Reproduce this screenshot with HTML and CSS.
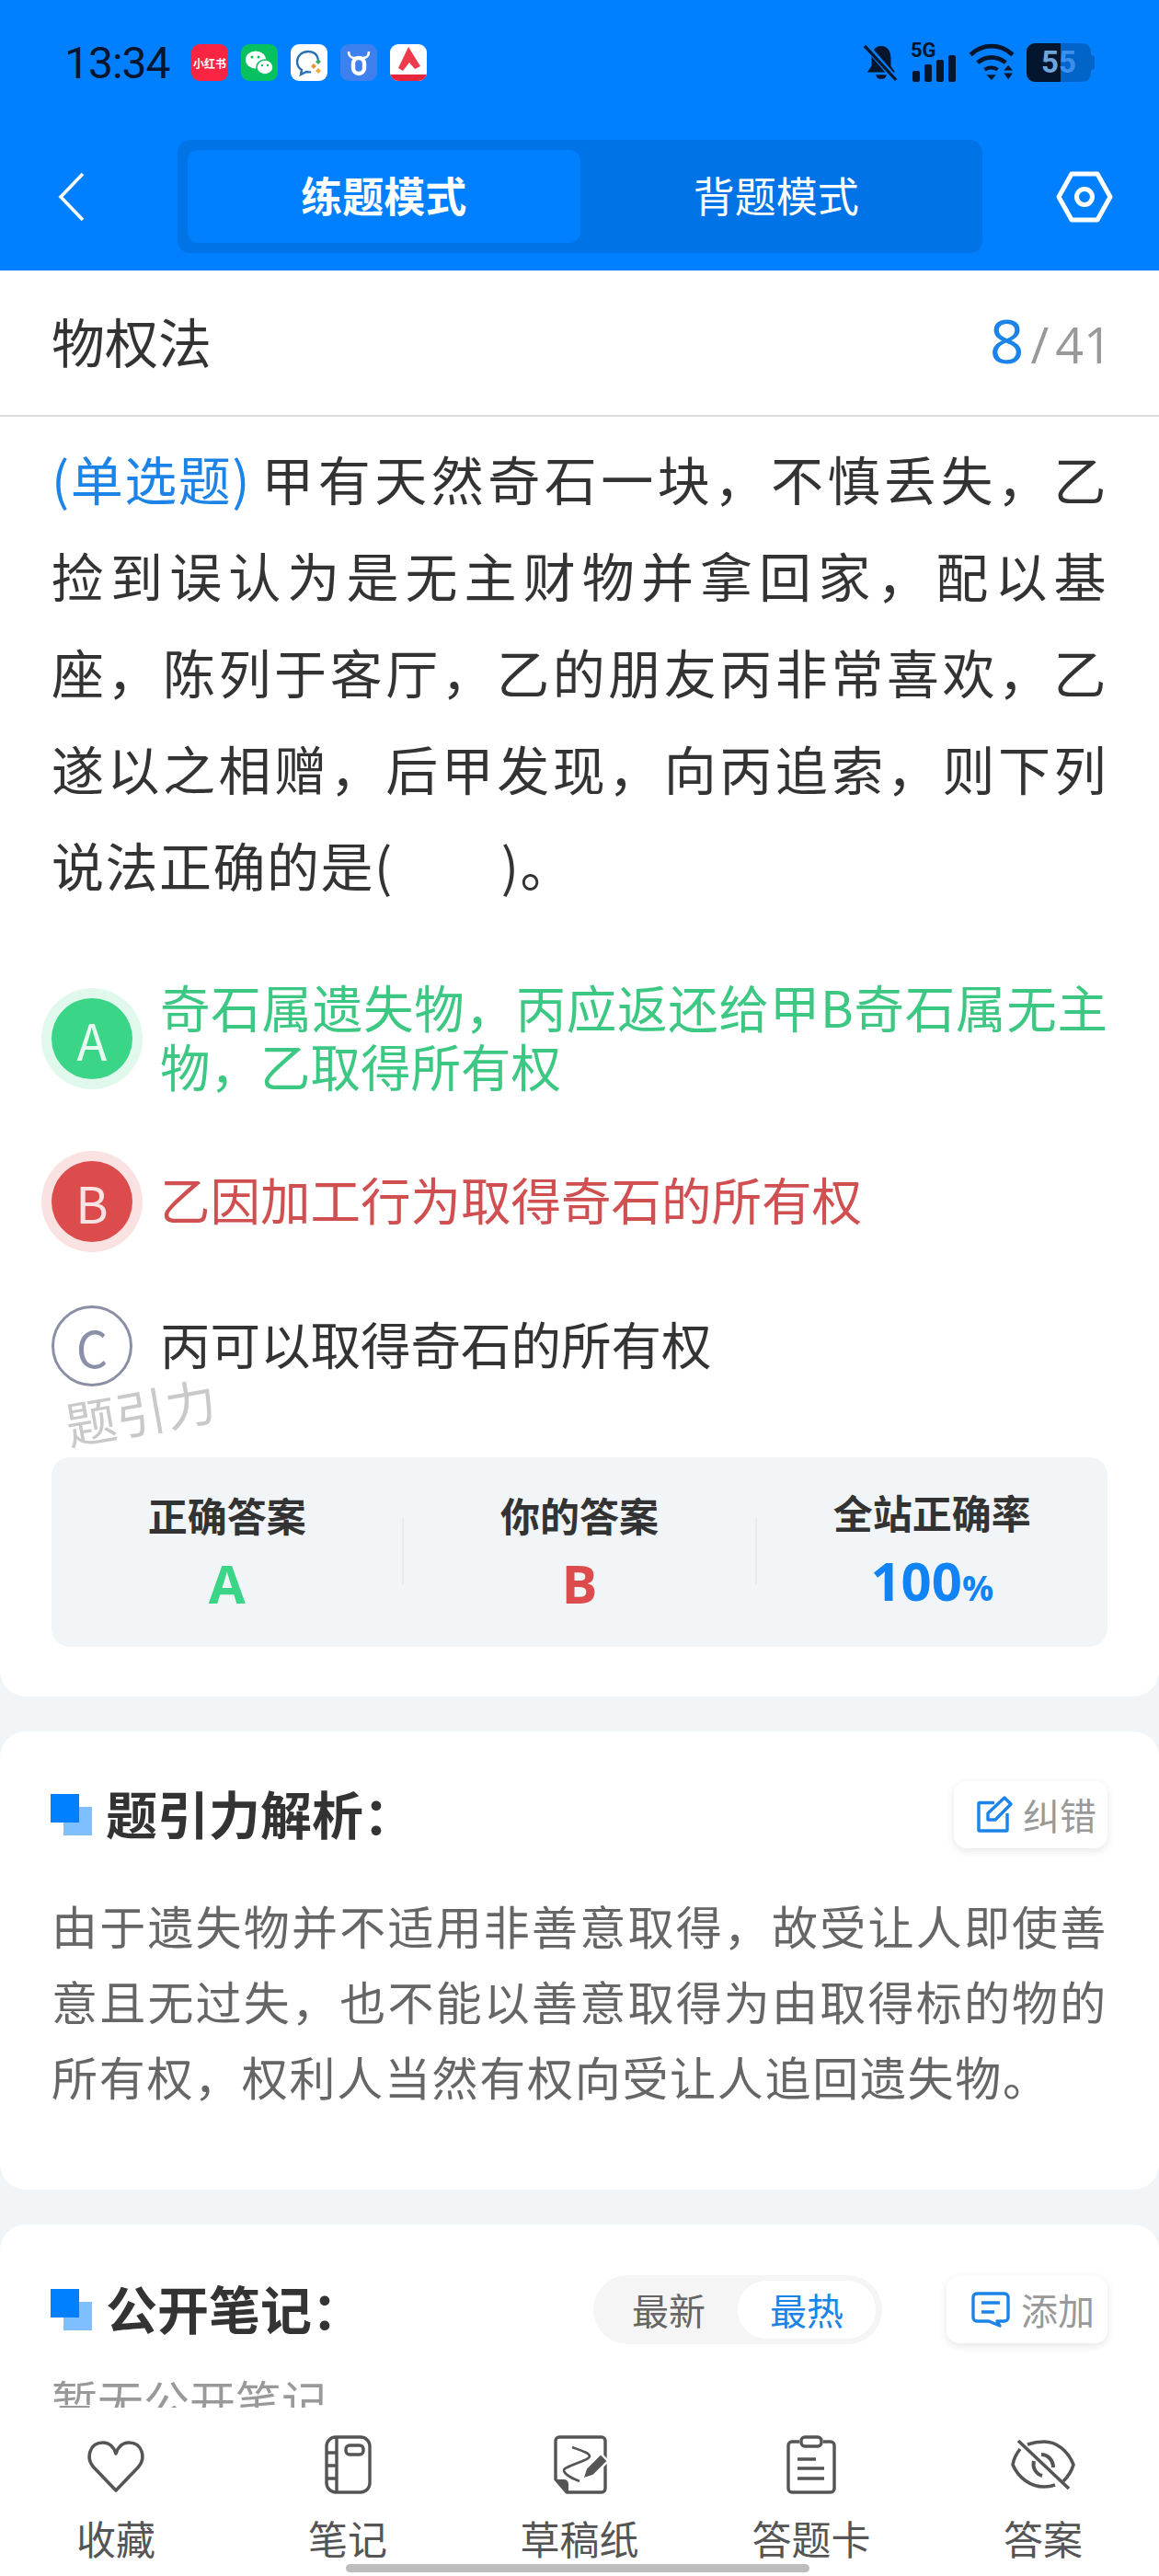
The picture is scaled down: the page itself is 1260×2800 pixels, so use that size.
FILE: index.html
```html
<!DOCTYPE html>
<html lang="zh-CN">
<head>
    <meta charset="UTF-8">
    <title>物权法</title>
    <link rel="stylesheet" href="styles.css">
</head>
<body>
    <div class="app">
        <div class="top-blue">
            <div class="status-bar">
                <span class="clock">13:34</span>
                <div class="notif-icons">
                    <span class="app-ic ic-red">小红书</span>
                    <span class="app-ic ic-green">
                        <svg viewBox="0 0 40 40" width="40" height="40"><ellipse cx="16" cy="17" rx="11" ry="9.5" fill="#fff"/><ellipse cx="26" cy="25" rx="9" ry="8" fill="#fff" stroke="#07c160" stroke-width="1.5"/><circle cx="12" cy="14" r="1.5" fill="#07c160"/><circle cx="19" cy="14" r="1.5" fill="#07c160"/><circle cx="23" cy="23" r="1.2" fill="#07c160"/><circle cx="29" cy="23" r="1.2" fill="#07c160"/></svg>
                    </span>
                    <span class="app-ic ic-white">
                        <svg viewBox="0 0 40 40" width="40" height="40"><path d="M30 17C29 11 25 8 19 8 12 8 7 13 7 19c0 4 2 7 5 9l-1 5 6-3c2 .5 4 .5 5 0" fill="none" stroke="#2a6fb5" stroke-width="2.4"/><path d="M27 19l3-3 3 3-3 3z" fill="#3aa76d"/><path d="M22 24l3-3 3 3-3 3z" fill="#e8963a"/><path d="M27 29l3-3 3 3-3 3z" fill="#e8b03a"/></svg>
                    </span>
                    <span class="app-ic ic-blue">
                        <svg viewBox="0 0 40 40" width="40" height="40"><path d="M9 8c0 5 3 7 6 7h10c3 0 6-2 6-7" fill="none" stroke="#fff" stroke-width="2.6"/><rect x="14" y="15" width="12" height="17" rx="6" fill="none" stroke="#fff" stroke-width="4.4"/></svg>
                    </span>
                    <span class="app-ic ic-book">
                        <svg viewBox="0 0 40 40" width="40" height="40"><path d="M20 3L9 26l5 3 7-9 6 7 6-3z" fill="#ee3b4c"/><rect x="0" y="33" width="40" height="7" fill="#e8263e"/></svg>
                    </span>
                </div>
                <div class="sys-icons">
                    <svg class="sys-bell" viewBox="0 0 40 44" width="38" height="42"><path d="M20 3c8 0 11 7 11 14v9l5 7H4l5-7v-9C9 10 12 3 20 3z" fill="#04162e"/><path d="M14 36h12a6 5 0 0 1-12 0z" fill="#04162e"/><path d="M3 3l34 39" stroke="#0080ff" stroke-width="7"/><path d="M1 3l36 39" stroke="#04162e" stroke-width="3.4"/></svg>
                    <div class="sys-signal">
                        <span class="sig-5g">5G</span>
                        <svg viewBox="0 0 47 29" width="47" height="29"><rect x="0" y="17" width="8" height="12" rx="2"/><rect x="13" y="10" width="8" height="19" rx="2"/><rect x="26" y="5" width="8" height="24" rx="2"/><rect x="39" y="0" width="8" height="29" rx="2"/></svg>
                    </div>
                    <svg class="sys-wifi" viewBox="0 0 52 44" width="52" height="42"><path d="M2 13c14-13 34-13 48 0" fill="none" stroke="#04162e" stroke-width="5"/><path d="M10 22c10-8 22-8 32 0" fill="none" stroke="#04162e" stroke-width="5"/><path d="M18 30c5-3 10-3 15 0" fill="none" stroke="#04162e" stroke-width="4"/><path d="M20 36h11l-5 6zM40 31l5-6 5 6zM40 34h10l-5 7z" fill="#04162e"/></svg>
                    <div class="battery">
                        <span class="batt-fill"></span>
                        <span class="batt-num">5<span class="batt-num2">5</span></span>
                    </div>
                </div>
            </div>
            <div class="nav-bar">
                <svg class="nav-back" viewBox="0 0 30 56" width="30" height="56"><path d="M27 3L3 28l24 25" fill="none" stroke="#fff" stroke-width="3.6"/></svg>
                <div class="mode-tabs">
                    <div class="mode-tab active">练题模式</div>
                    <div class="mode-tab">背题模式</div>
                </div>
                <svg class="nav-set" viewBox="0 0 62 56" width="62" height="56"><path d="M17 3h28l14 25-14 25H17L3 28z" fill="none" stroke="#fff" stroke-width="5" stroke-linejoin="round"/><circle cx="31" cy="28" r="8.5" fill="none" stroke="#fff" stroke-width="5"/></svg>
            </div>
        </div>

        <div class="card card-question">
            <div class="chapter-row">
                <span class="chapter-name">物权法</span>
                <span class="chapter-count"><b>8</b><i>/</i>41</span>
            </div>
            <div class="question-text"><span class="q-type">(单选题)</span>甲有天然奇石一块，不慎丢失，乙捡到误认为是无主财物并拿回家，配以基座，陈列于客厅，乙的朋友丙非常喜欢，乙遂以之相赠，后甲发现，向丙追索，则下列说法正确的是(　　)。</div>
            <div class="options">
                <div class="option opt-right">
                    <span class="opt-badge">A</span>
                    <span class="opt-text">奇石属遗失物，丙应返还给甲B奇石属无主物，乙取得所有权</span>
                </div>
                <div class="option opt-wrong">
                    <span class="opt-badge">B</span>
                    <span class="opt-text">乙因加工行为取得奇石的所有权</span>
                </div>
                <div class="option">
                    <span class="opt-badge">C</span>
                    <span class="opt-text">丙可以取得奇石的所有权</span>
                </div>
                <span class="watermark">题引力</span>
            </div>
            <div class="result-box">
                <div class="result-cell">
                    <div class="result-label">正确答案</div>
                    <div class="result-val green">A</div>
                </div>
                <span class="result-sep"></span>
                <div class="result-cell">
                    <div class="result-label">你的答案</div>
                    <div class="result-val red">B</div>
                </div>
                <span class="result-sep"></span>
                <div class="result-cell">
                    <div class="result-label">全站正确率</div>
                    <div class="result-val blue">100<small>%</small></div>
                </div>
            </div>
        </div>

        <div class="card card-analysis">
            <div class="sec-head">
                <span class="sec-mark"></span>
                <span class="sec-title">题引力解析：</span>
                <span class="mini-btn">
                    <svg viewBox="0 0 40 40" width="40" height="40"><path d="M19 7.5H3a1 1 0 0 0-1 1V37a1 1 0 0 0 1 1h29a1 1 0 0 0 1-1V19" fill="none" stroke="#1c84e8" stroke-width="3.4" stroke-linejoin="round"/><path d="M12 26v-7L30 2l7 7-17 17z" fill="none" stroke="#1c84e8" stroke-width="3.4" stroke-linejoin="round"/></svg>
                    纠错
                </span>
            </div>
            <div class="analysis-text">由于遗失物并不适用非善意取得，故受让人即使善意且无过失，也不能以善意取得为由取得标的物的所有权，权利人当然有权向受让人追回遗失物。</div>
        </div>

        <div class="card card-notes">
            <div class="sec-head">
                <span class="sec-mark"></span>
                <span class="sec-title">公开笔记：</span>
                <div class="sort-pill">
                    <span class="sort-item">最新</span>
                    <span class="sort-item active">最热</span>
                </div>
                <span class="mini-btn btn-add">
                    <svg viewBox="0 0 42 40" width="42" height="40"><path d="M6 3h30a4 4 0 0 1 4 4v22a4 4 0 0 1-4 4H28l3 5-12-5H6a4 4 0 0 1-4-4V7a4 4 0 0 1 4-4z" fill="none" stroke="#1c84e8" stroke-width="3.4" stroke-linejoin="round"/><path d="M11 13h20M11 23h14" stroke="#1c84e8" stroke-width="3.4"/></svg>
                    添加
                </span>
            </div>
            <div class="notes-empty">暂无公开笔记</div>
        </div>

        <div class="tool-bar">
            <div class="tool">
                <svg viewBox="0 0 64 64" width="64" height="64"><path d="M32 60L8 35C-1 25 3 8 18 8c7 0 12 5 14 12 2-7 7-12 14-12 15 0 19 17 10 27z" fill="none" stroke="#555" stroke-width="3.6" stroke-linejoin="round"/></svg>
                <span>收藏</span>
            </div>
            <div class="tool">
                <svg viewBox="0 0 64 64" width="64" height="64"><rect x="9" y="2" width="47" height="60" rx="10" fill="none" stroke="#555" stroke-width="3.4"/><path d="M20 2v60M9 19h11M9 33h11M9 47h11" stroke="#555" stroke-width="3.4"/><rect x="30" y="11" width="19" height="10" rx="4" fill="none" stroke="#555" stroke-width="3.4"/></svg>
                <span>笔记</span>
            </div>
            <div class="tool">
                <svg viewBox="0 0 64 64" width="64" height="64"><path d="M18 62h38a4 4 0 0 0 4-4V6a4 4 0 0 0-4-4H10a4 4 0 0 0-4 4v42z" fill="none" stroke="#555" stroke-width="3.4" stroke-linejoin="round"/><path d="M6 48h9a5 5 0 0 1 5 5v9z" fill="#555"/><path d="M24 13c8 3 19 6 19 10s-28 11-28 15 9 9 17 12" fill="none" stroke="#555" stroke-width="2.6"/><path d="M35 48l4-12 16-16 8 8-16 16z" fill="#555" stroke="#fff" stroke-width="2.4"/></svg>
                <span>草稿纸</span>
            </div>
            <div class="tool">
                <svg viewBox="0 0 64 64" width="64" height="64"><path d="M19 7h-8a4 4 0 0 0-4 4v47a4 4 0 0 0 4 4h42a4 4 0 0 0 4-4V11a4 4 0 0 0-4-4h-8" fill="none" stroke="#555" stroke-width="3.4"/><rect x="21" y="2" width="22" height="10" rx="4" fill="none" stroke="#555" stroke-width="3.4"/><path d="M17 26h20M17 36h29M17 47h29" stroke="#555" stroke-width="3.6"/></svg>
                <span>答题卡</span>
            </div>
            <div class="tool">
                <svg viewBox="0 0 70 64" width="70" height="64"><path d="M18 10c6-2 12-3 18-3 14 0 26 10 32 25-2 7-6 13-11 18" fill="none" stroke="#555" stroke-width="3.6"/><path d="M10 15c-4 5-7 11-8 17 6 14 19 24 34 24 4 0 8-.5 12-2" fill="none" stroke="#555" stroke-width="3.6"/><path d="M8 6l55 52" stroke="#555" stroke-width="3.6"/><path d="M25 28c-2 7 2 14 9 16M33 21c7 0 13 6 13 14" fill="none" stroke="#555" stroke-width="4"/></svg>
                <span>答案</span>
            </div>
            <span class="home-bar"></span>
        </div>
    </div>
</body>
</html>
```

FILE: styles.css
```css
* {
    box-sizing: border-box;
}
html, body {
    margin: 0;
    padding: 0;
}
body {
    font-family: "Noto Sans CJK SC", "Noto Sans", sans-serif;
    background-color: #f1f5f8;
    color: #333;
}
.app {
    width: 1260px;
    height: 2800px;
    display: flex;
    flex-direction: column;
    overflow: hidden;
    position: relative;
}

/* top */
.top-blue {
    height: 294px;
    flex-shrink: 0;
    background-color: #0080ff;
}
.status-bar {
    height: 136px;
    display: flex;
    align-items: center;
    padding: 0 74px 0 70px;
}
.clock {
    font-family: "Roboto", sans-serif;
    font-size: 48px;
    color: #04162e;
    letter-spacing: -1px;
    width: 122px;
    flex-shrink: 0;
}
.notif-icons {
    display: flex;
    gap: 14px;
    margin-left: 16px;
}
.app-ic {
    width: 40px;
    height: 40px;
    border-radius: 9px;
    overflow: hidden;
    display: flex;
    align-items: center;
    justify-content: center;
}
.ic-red {
    background-color: #fb2543;
    color: #fff;
    font-size: 12px;
    font-weight: bold;
    white-space: nowrap;
}
.ic-green {
    background-color: #07c160;
}
.ic-white {
    background-color: #fff;
}
.ic-blue {
    background-color: #3d80ee;
}
.ic-book {
    background-color: #fff;
}
.sys-icons {
    margin-left: auto;
    display: flex;
    align-items: center;
    gap: 13px;
}
.sys-signal {
    width: 49px;
    display: flex;
    flex-direction: column;
    align-items: flex-end;
}
.sys-signal svg {
    fill: #04162e;
    margin-top: -3px;
    display: block;
}
.sig-5g {
    align-self: flex-start;
    font-family: "Roboto", sans-serif;
    font-size: 22px;
    font-weight: 700;
    line-height: 16px;
    color: #04162e;
}
.battery {
    width: 70px;
    height: 42px;
    margin-left: -1px;
    background-color: #0064c8;
    border-radius: 9px;
    position: relative;
}
.battery::after {
    content: "";
    position: absolute;
    right: -4px;
    top: 13px;
    width: 4px;
    height: 16px;
    border-radius: 0 3px 3px 0;
    background-color: #0064c8;
}
.batt-fill {
    position: absolute;
    left: 0;
    top: 0;
    bottom: 0;
    width: 37px;
    border-radius: 9px 0 0 9px;
    background-color: #04162e;
}
.batt-num {
    position: absolute;
    left: 16px;
    top: 0;
    font-family: "Roboto", sans-serif;
    font-size: 33px;
    font-weight: 700;
    line-height: 42px;
    color: #6ea6dc;
}
.batt-num2 {
    color: #3f90ee;
}
.nav-bar {
    height: 158px;
    display: flex;
    align-items: flex-start;
    padding: 16px 0 0 0;
}
.nav-back {
    margin: 34px 0 0 63px;
    flex-shrink: 0;
}
.mode-tabs {
    width: 875px;
    height: 123px;
    margin: 0 0 0 100px;
    padding: 11px;
    background-color: #0073e6;
    border-radius: 14px;
    display: flex;
    flex-shrink: 0;
}
.mode-tab {
    width: 50%;
    border-radius: 12px;
    color: #fff;
    font-size: 45px;
    line-height: 98px;
    height: 101px;
    text-align: center;
}
.mode-tab.active {
    background-color: #0080ff;
    font-weight: bold;
}
.nav-set {
    margin: 34px 0 0 80px;
    flex-shrink: 0;
}

/* cards */
.card {
    background-color: #fff;
    border-radius: 0 0 28px 28px;
    flex-shrink: 0;
}
.card-question {
    height: 1550px;
}
.chapter-row {
    height: 159px;
    padding: 0 51px 0 56px;
    border-bottom: 2px solid #dadada;
    display: flex;
    align-items: center;
    justify-content: space-between;
}
.chapter-name {
    font-size: 58px;
    color: #333;
    margin-top: -6px;
}
.chapter-count {
    font-family: "Open Sans", sans-serif;
    font-size: 54px;
    color: #999;
    margin-top: -8px;
}
.chapter-count b {
    font-size: 66px;
    font-weight: 400;
    color: #1c84e8;
}
.chapter-count i {
    font-style: normal;
    margin: 0 7px;
}
.question-text {
    margin: 0 56px;
    padding-top: 14px;
    font-size: 57px;
    line-height: 105px;
    letter-spacing: 1.5px;
    text-align: justify;
    color: #333;
}
.q-type {
    color: #1c84e8;
    letter-spacing: -1.5px;
    margin-right: 11px;
}
.options {
    margin: 76px 56px 0;
    position: relative;
}
.option {
    display: flex;
    align-items: center;
    min-height: 88px;
    margin-bottom: 69px;
}
.option.opt-right {
    margin-bottom: 72px;
}
.option:last-of-type {
    margin-bottom: 77px;
}
.opt-badge {
    width: 88px;
    height: 88px;
    flex-shrink: 0;
    border-radius: 50%;
    border: 3px solid #8a8fa5;
    color: #8a90a8;
    font-size: 54px;
    display: flex;
    align-items: center;
    justify-content: center;
    margin-right: 30px;
}
.opt-text {
    flex: 1;
    margin-top: -6px;
    font-size: 54.5px;
    line-height: 64px;
    text-align: justify;
    color: #333;
}
.opt-right .opt-badge {
    background-color: #3ad587;
    border: none;
    color: #e8fbf1;
    box-shadow: 0 0 0 11px #e1f8ec;
}
.opt-right .opt-text {
    color: #3cc883;
}
.opt-wrong .opt-badge {
    background-color: #dc4c4c;
    border: none;
    color: #fbe3e3;
    box-shadow: 0 0 0 11px #fae2e2;
}
.opt-wrong .opt-text {
    color: #d04f50;
}
.watermark {
    position: absolute;
    left: 14px;
    bottom: -65px;
    font-size: 55px;
    line-height: 78px;
    color: #c9c9c9;
    transform: rotate(-10deg);
}
.result-box {
    margin: 0 56px;
    height: 206px;
    padding-top: 5px;
    background-color: #f1f5f8;
    border-radius: 20px;
    display: flex;
    align-items: center;
}
.result-cell {
    flex: 1;
    text-align: center;
}
.result-sep {
    width: 2px;
    height: 73px;
    margin-top: -8px;
    background-color: #e8ecef;
}
.result-label {
    font-size: 43px;
    font-weight: bold;
    line-height: 46px;
    color: #333;
}
.result-val {
    font-family: "Open Sans", sans-serif;
    font-size: 58px;
    font-weight: 700;
    line-height: 70px;
    margin-top: 17px;
}
.result-val small {
    font-size: 38px;
}
.green {
    color: #3ad587;
}
.red {
    color: #dc4c4c;
}
.blue {
    color: #1084f5;
}
.card-analysis {
    margin-top: 38px;
    height: 498px;
    border-radius: 28px;
    padding: 53px 56px 0;
}
.sec-head {
    display: flex;
    align-items: center;
    height: 74px;
}
.sec-mark {
    width: 45px;
    height: 45px;
    margin-left: -1px;
    position: relative;
    flex-shrink: 0;
}
.sec-mark::before,
.sec-mark::after {
    content: "";
    position: absolute;
    width: 31px;
    height: 31px;
}
.sec-mark::before {
    right: 0;
    bottom: 0;
    background-color: #80bfff;
}
.sec-mark::after {
    left: 0;
    top: 0;
    background-color: #0080ff;
}
.sec-title {
    font-size: 56px;
    font-weight: bold;
    color: #333;
    margin: -6px 0 0 15px;
}
.mini-btn {
    margin-left: auto;
    width: 167px;
    height: 73px;
    padding-left: 25px;
    background-color: #fff;
    border-radius: 14px;
    box-shadow: 0 3px 10px rgba(0, 0, 0, 0.1);
    color: #999;
    font-size: 40px;
    display: flex;
    align-items: center;
    gap: 10px;
    flex-shrink: 0;
}
.analysis-text {
    margin-top: 42px;
    font-size: 50px;
    line-height: 82px;
    letter-spacing: 1.7px;
    color: #666;
    text-align: justify;
}
.card-notes {
    margin-top: 38px;
    height: 300px;
    border-radius: 28px 28px 0 0;
    padding: 55px 56px 0;
}
.sort-pill {
    margin-left: auto;
    margin-right: 70px;
    width: 314px;
    height: 75px;
    padding: 6px 7px;
    background-color: #f5f5f5;
    border-radius: 38px;
    display: flex;
    flex-shrink: 0;
}
.sort-item {
    flex: 1;
    border-radius: 31px;
    text-align: center;
    color: #666;
    font-size: 40px;
    line-height: 62px;
}
.sort-item.active {
    background-color: #fff;
    color: #1c84e8;
}
.btn-add {
    margin-left: 0;
    width: 175px;
    padding-left: 27px;
    gap: 12px;
}
.notes-empty {
    margin-top: 31px;
    font-size: 50px;
    line-height: 60px;
    color: #999;
}

/* bottom tools */
.tool-bar {
    position: absolute;
    left: 0;
    right: 0;
    bottom: 0;
    height: 183px;
    background-color: #fff;
    display: flex;
}
.tool {
    flex: 1;
    display: flex;
    flex-direction: column;
    align-items: center;
    padding-top: 30px;
    font-size: 43px;
    color: #555;
}
.tool span {
    line-height: 54px;
    margin-top: 20px;
}
.home-bar {
    position: absolute;
    left: 376px;
    bottom: 4px;
    width: 504px;
    height: 9px;
    border-radius: 5px;
    background-color: #bdbdbd;
}
```
